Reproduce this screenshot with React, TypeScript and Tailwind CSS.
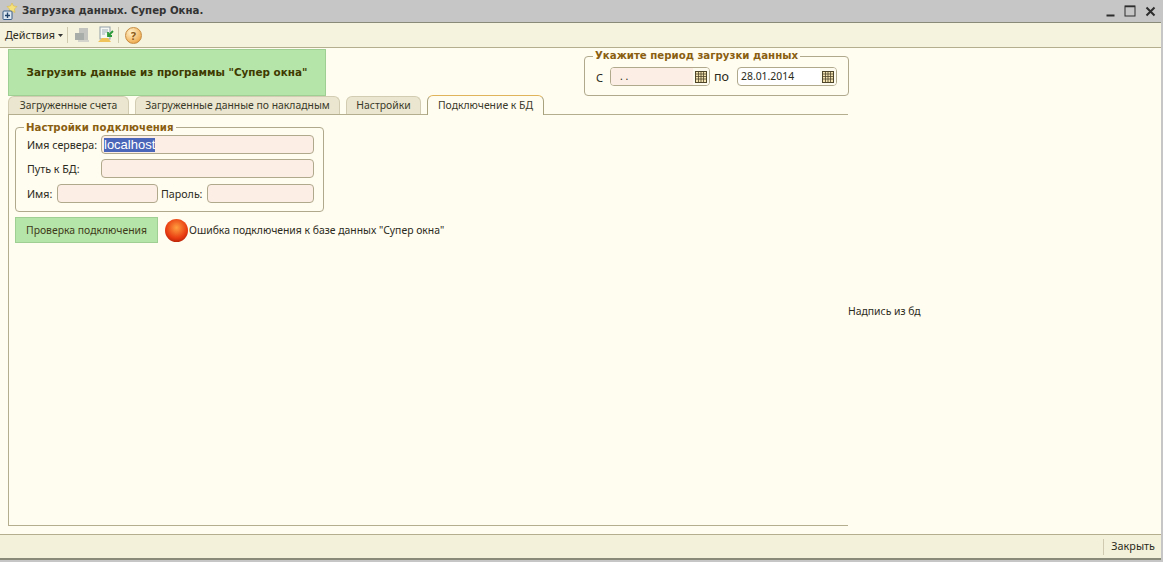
import React from "react";

const font = "font-['Noto_Sans','Liberation_Sans',sans-serif]";
const boldFont = "font-['DejaVu_Sans',sans-serif] font-bold";

function CalIcon() {
  return (
    <svg width="12" height="12" viewBox="0 0 12 12" className="shrink-0">
      <rect x="0.5" y="0.5" width="11" height="11" fill="#f3e3b0" stroke="#4f4528" />
      <path d="M0.500 3H11.500M0.500 5.500H11.500M0.500 8H11.500M3.500 0.500V11.500M6 0.500V11.500M8.500 0.500V11.500" stroke="#4f4528" strokeWidth="0.8" />
    </svg>
  );
}

function Tab({ label, w, active }: { label: string; w: string; active?: boolean }) {
  return (
    <div
      className={`${w} shrink-0 flex items-center justify-center rounded-t-[6px] border border-b-0 text-[10.4px] text-[#3a3a2a] ${
        active
          ? "h-[20px] border-[#a9a27f] border-t-[#e0b45a] bg-[#fffcf0] relative top-px"
          : "h-[18px] border-[#d2cdb2] bg-[#ebe6cf]"
      }`}
    >
      {label}
    </div>
  );
}

function Field({ className, children }: { className: string; children?: React.ReactNode }) {
  return (
    <div className={`${className} h-[19px] rounded-[4px] border border-[#b0a98c] bg-[#fdeee5] flex items-center pl-[2px]`}>
      {children}
    </div>
  );
}

function DateField({ pink, children }: { pink?: boolean; children: React.ReactNode }) {
  return (
    <div className={`w-[100px] h-[19px] mt-[1px] rounded-[4px] border border-[#b0a98c] flex items-stretch overflow-hidden ${pink ? "bg-[#fdfbef]" : "bg-white"}`}>
      <div className={`flex-1 flex items-center text-[10.4px] ${pink ? "bg-[#fdeee5] pl-[9px]" : "pl-[3px]"}`}>{children}</div>
      <div className="w-[16px] flex items-center justify-center bg-[#fdfbef]">
        <CalIcon />
      </div>
    </div>
  );
}

export default function App() {
  return (
    <div className={`${font} w-[1163px] h-[562px] overflow-hidden bg-[#c6c6c6] flex flex-col text-[#2b2b20]`}>
      <div className="h-[22px] shrink-0 flex items-center pl-[1px] pr-[3px]">
        <svg width="19" height="19" viewBox="0 0 19 19" className="shrink-0">
          <path d="M11 1l1.500 3 3.500.5-2.500 2.500.5 3.500-3-1.500-3 1.500.5-3.500L6 4.500 9.500 4z" fill="#f6e27a" stroke="#d9b84a" strokeWidth="0.6" />
          <rect x="2" y="9" width="9" height="8.500" rx="1" fill="#dfe9f2" stroke="#3b5f86" />
          <path d="M6.500 10.500V16M4 13.500h5" stroke="#24456b" strokeWidth="1.400" />
        </svg>
        <span className={`${boldFont} ml-[2px] text-[10.2px] text-[#333]`}>Загрузка данных. Супер Окна.</span>
        <div className="ml-auto flex items-center gap-[9px] pr-[4px] text-[#2d2d2d]">
          <svg width="9" height="11" viewBox="0 0 9 11"><path d="M0.500 9.500h8" stroke="currentColor" strokeWidth="2" /></svg>
          <svg width="12" height="12" viewBox="0 0 12 12"><rect x="1" y="1" width="10" height="10" fill="none" stroke="currentColor" /><path d="M1 1.500h10" stroke="currentColor" strokeWidth="1.500" /></svg>
          <svg width="11" height="11" viewBox="0 0 11 11"><path d="M1.500 1.500l8 8M9.500 1.500l-8 8" stroke="currentColor" strokeWidth="2" /></svg>
        </div>
      </div>

      <div className="flex-1 min-h-0 mr-[2px] mb-[2px] flex flex-col">
        <div className="h-[26px] shrink-0 bg-[#f5f2dd] border-t border-t-[#8a8a78] border-b border-b-[#b4ae8e] flex items-center pl-[5px] text-[10.8px]">
          <span>Действия</span>
          <svg width="5" height="3" viewBox="0 0 5 3" className="ml-[3px] mt-px"><path d="M0 0h5L2.500 3z" fill="#333" /></svg>
          <div className="ml-[4px] h-[16px] w-px bg-[#cfcab0]" />
          <svg width="17" height="17" viewBox="0 0 17 17" className="ml-[6px]">
            <rect x="5" y="1" width="9" height="13" fill="#c3c4bf" />
            <rect x="1" y="6" width="9" height="7" fill="#a9adaa" />
            <rect x="4" y="13" width="11" height="2" fill="#d4d4cc" />
          </svg>
          <svg width="18" height="18" viewBox="0 0 18 18" className="ml-[6px]">
            <rect x="3" y="1" width="10" height="12" fill="#f6f8f4" stroke="#93a1a8" />
            <path d="M5 4h6M5 6h6M5 8h3" stroke="#9fb0b8" />
            <path d="M1 16l4-4h6l3 4z" fill="#efc35a" />
            <path d="M16 5l-5 5M11 6v4h4" stroke="#2c9a3a" strokeWidth="1.800" fill="none" />
          </svg>
          <div className="ml-[3px] h-[16px] w-px bg-[#cfcab0]" />
          <div className="ml-[6px] w-[17px] h-[17px] rounded-full bg-[radial-gradient(circle_at_35%_30%,#fff3cf,#f1b25a_70%,#cf8a35)] border border-[#c68c42] flex items-center justify-center text-[11px] font-bold leading-none text-[#8b5a18]">?</div>
        </div>

        <div className="flex-1 min-h-0 bg-[#fffcf0] flex">
          <div className="w-[848px] shrink-0 pl-[8px] flex flex-col">
            <div className="h-[48px] shrink-0 flex items-end">
              <div className={`${boldFont} shrink-0 w-[318px] h-[47px] bg-[#b5e5a8] border border-[#9fcf93] flex items-center justify-center text-[10.400px] text-[#3f3a00]`}>
                Загрузить данные из программы "Супер окна"
              </div>
              <div className="relative shrink-0 ml-[258px] w-[265px] h-[40px] rounded-[4px] border border-[#b0a98c] flex items-center pl-[11px] text-[11px]">
                <span className={`${boldFont} absolute left-[8px] -top-[8px] px-[2px] bg-[#fffcf0] text-[10.200px] leading-[13px] text-[#8a5f10]`}>
                  Укажите период загрузки данных
                </span>
                <span className="w-[14px] mt-[4px]">С</span>
                <DateField pink>. .</DateField>
                <span className="ml-[4px] w-[23px] mt-[3px] text-[12.500px]">по</span>
                <DateField>28.01.2014</DateField>
              </div>
            </div>
            <div className="h-[19px] shrink-0 flex items-end gap-[6px] border-b border-[#b4ae8e]">
              <Tab label="Загруженные счета" w="w-[121px]" />
              <Tab label="Загруженные данные по накладным" w="w-[205px]" />
              <Tab label="Настройки" w="w-[75px]" />
              <Tab label="Подключение к БД" w="w-[117px]" active />
            </div>
            <div className="h-[411px] shrink-0 border-l border-b border-[#b4ae8e] pl-[6px] pt-[12px] text-[10.400px]">
              <div className="relative w-[309px] h-[85px] rounded-[4px] border border-[#b0a98c] pl-[11px] pt-[7px] text-[10.700px]">
                <span className={`${boldFont} absolute left-[8px] -top-[7px] px-[2px] bg-[#fffcf0] text-[10.200px] leading-[13px] text-[#8a5f10]`}>
                  Настройки подключения
                </span>
                <div className="flex items-center h-[19px]">
                  <span className="w-[74px] pt-[2px]">Имя сервера:</span>
                  <Field className="w-[213px]">
                    <span className="bg-[#4a66b8] text-white text-[13px] leading-[14px] font-['Liberation_Sans',sans-serif]">localhost</span>
                  </Field>
                </div>
                <div className="flex items-center h-[19px] mt-[5px]">
                  <span className="w-[74px] pt-[2px]">Путь к БД:</span>
                  <Field className="w-[213px]" />
                </div>
                <div className="flex items-center h-[19px] mt-[6px]">
                  <span className="w-[30px] pt-[2px]">Имя:</span>
                  <Field className="w-[101px]" />
                  <span className="w-[49px] pl-[3px] pt-[2px]">Пароль:</span>
                  <Field className="w-[107px]" />
                </div>
              </div>
              <div className="flex items-center mt-[5px]">
                <div className="w-[143px] h-[26px] pt-px bg-[#b5e5a8] border border-[#9fcf93] flex items-center justify-center text-[#3f3a1a]">
                  Проверка подключения
                </div>
                <div className="ml-[7px] w-[23px] h-[23px] rounded-full bg-[radial-gradient(circle_at_50%_38%,#ffa040,#e83a10_58%,#8e1205)]" />
                <span className="ml-[1px] pt-px">Ошибка подключения к базе данных "Супер окна"</span>
              </div>
            </div>
          </div>
          <div className="pt-[256px] text-[10.400px]">Надпись из бд</div>
        </div>

        <div className="h-[26px] shrink-0 bg-[#f3f1da] border-t border-t-[#b4ae8e] border-b-2 border-b-[#8a8a78] flex items-center justify-end pr-[6px] text-[10.800px]">
          <div className="h-[16px] w-px bg-[#cfcab0] mr-[7px]" />
          <span>Закрыть</span>
        </div>
      </div>
    </div>
  );
}
